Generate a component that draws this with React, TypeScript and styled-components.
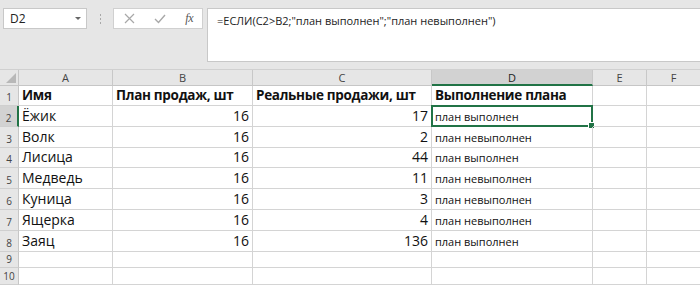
import React from 'react'
import styled, { createGlobalStyle, css } from 'styled-components'

const GlobalStyle = createGlobalStyle`
    html, body {
        margin: 0;
        padding: 0;
        background: #ffffff;
        overflow: hidden;
    }
    body {
        font-family: 'Open Sans', 'Liberation Sans', sans-serif;
    }
`

const GREEN = '#217346'
const GRID = '#d4d4d4'

const Window = styled.div`
    width: 700px;
    height: 288px;
    display: flex;
    flex-direction: column;
    background: #ffffff;
`

const Toolbar = styled.div`
    height: 70px;
    flex: none;
    background: #e6e6e6;
    display: flex;
    align-items: flex-start;
    padding: 8px 0 0 3px;
    box-sizing: border-box;
    border-bottom: 1px solid #d0d0d0;
`

const NameBox = styled.div`
    width: 84px;
    height: 21px;
    box-sizing: border-box;
    background: #ffffff;
    border: 1px solid #c8c8c8;
    display: flex;
    align-items: center;
    justify-content: space-between;
    padding: 0 5px 0 6px;
    font-size: 12px;
    color: #222;
`

const Caret = styled.span`
    width: 0;
    height: 0;
    border-left: 3px solid transparent;
    border-right: 3px solid transparent;
    border-top: 3px solid #666;
`

const Grip = styled.div`
    width: 26px;
    height: 21px;
    display: flex;
    flex-direction: column;
    align-items: center;
    justify-content: center;
    gap: 2px;

    span {
        width: 1px;
        height: 2px;
        background: #a8a8a8;
    }
`

const ButtonBox = styled.div`
    width: 90px;
    height: 21px;
    box-sizing: border-box;
    background: #ffffff;
    border: 1px solid #d0d0d0;
    display: flex;
    align-items: center;
    justify-content: space-between;
    padding: 0 9px 0 10px;
`

const Fx = styled.span`
    font-family: 'Liberation Serif', serif;
    font-style: italic;
    font-size: 12px;
    color: #555;
    letter-spacing: -0.5px;
`

const FormulaBar = styled.div`
    flex: 1;
    height: 54px;
    margin-left: 4px;
    box-sizing: border-box;
    background: #ffffff;
    border: 1px solid #c8c8c8;
    border-right: none;
    padding: 4px 0 0 9px;
    font-size: 11px;
    color: #222;
`

const Sheet = styled.div`
    display: grid;
    grid-template-columns: 19px 94px 140px 179px 161px 54px 54px;
    grid-template-rows: 16px 20px repeat(7, 20.8px) 16.5px 16.5px;
`

const Corner = styled.div`
    position: relative;
    background: #e6e6e6;
    border-right: 1px solid #c6c6c6;
    border-bottom: 1px solid #c6c6c6;

    &::after {
        content: '';
        position: absolute;
        right: 2px;
        bottom: 2px;
        border-left: 10px solid transparent;
        border-bottom: 10px solid #b8b8b8;
    }
`

const ColHead = styled.div<{ $selected?: boolean }>`
    background: #e6e6e6;
    border-right: 1px solid #c8c8c8;
    border-bottom: 1px solid #c6c6c6;
    display: flex;
    align-items: center;
    justify-content: center;
    font-size: 11px;
    color: #444;

    ${p => p.$selected && css`
        background: #d2d2d2;
        border-bottom: 2px solid ${GREEN};
        color: #222;
    `}
`

const RowHead = styled.div<{ $selected?: boolean }>`
    background: #e6e6e6;
    border-bottom: 1px solid #cfcfcf;
    border-right: 1px solid #c6c6c6;
    display: flex;
    align-items: flex-end;
    justify-content: center;
    padding-bottom: 1px;
    box-sizing: border-box;
    font-size: 10px;
    color: #444;

    ${p => p.$selected && css`
        background: #d2d2d2;
        border-right: 2px solid ${GREEN};
    `}
`

const Cell = styled.div<{ $right?: boolean; $bold?: boolean; $small?: boolean }>`
    position: relative;
    border-right: 1px solid ${GRID};
    border-bottom: 1px solid ${GRID};
    display: flex;
    align-items: flex-end;
    justify-content: ${p => (p.$right ? 'flex-end' : 'flex-start')};
    padding: 0 3px;
    box-sizing: border-box;
    font-size: ${p => (p.$small ? '11px' : p.$bold ? '13.5px' : '14px')};
    letter-spacing: ${p => (p.$bold ? '-0.3px' : '0')};
    font-weight: ${p => (p.$bold ? 700 : 400)};
    line-height: ${p => (p.$small ? '18px' : '20px')};
    color: #111;
    white-space: nowrap;
`

const Selection = styled.div`
    position: absolute;
    left: -1px;
    top: -1px;
    right: -1px;
    bottom: -1px;
    border: 2px solid ${GREEN};
    pointer-events: none;

    &::after {
        content: '';
        position: absolute;
        right: -4px;
        bottom: -4px;
        width: 5px;
        height: 5px;
        background: ${GREEN};
        border: 1px solid #ffffff;
    }
`

const columns = ['A', 'B', 'C', 'D', 'E', 'F']

const data: [string, number, number, string][] = [
    ['Ёжик', 16, 17, 'план выполнен'],
    ['Волк', 16, 2, 'план невыполнен'],
    ['Лисица', 16, 44, 'план выполнен'],
    ['Медведь', 16, 11, 'план невыполнен'],
    ['Куница', 16, 3, 'план невыполнен'],
    ['Ящерка', 16, 4, 'план невыполнен'],
    ['Заяц', 16, 136, 'план выполнен']
]

const CrossIcon = () => (
    <svg width='11' height='11' viewBox='0 0 11 11'>
        <path d='M1 1 L10 10 M10 1 L1 10' stroke='#a8a8a8' strokeWidth='1.2' fill='none' />
    </svg>
)

const CheckIcon = () => (
    <svg width='12' height='10' viewBox='0 0 12 10'>
        <path d='M1 5 L4.5 8.5 L11 1' stroke='#a8a8a8' strokeWidth='1.4' fill='none' />
    </svg>
)

const EmptyRow = ({ n }: { n: number }) => (
    <>
        <RowHead>{n}</RowHead>
        {columns.map(c => <Cell key={c} />)}
    </>
)

const App = () => (
    <Window>
        <GlobalStyle />
        <Toolbar>
            <NameBox>
                D2
                <Caret />
            </NameBox>
            <Grip>
                <span />
                <span />
                <span />
            </Grip>
            <ButtonBox>
                <CrossIcon />
                <CheckIcon />
                <Fx>fx</Fx>
            </ButtonBox>
            <FormulaBar>=ЕСЛИ(C2&gt;B2;"план выполнен";"план невыполнен")</FormulaBar>
        </Toolbar>
        <Sheet>
            <Corner />
            {columns.map(c => (
                <ColHead key={c} $selected={c === 'D'}>{c}</ColHead>
            ))}

            <RowHead>1</RowHead>
            <Cell $bold>Имя</Cell>
            <Cell $bold>План продаж, шт</Cell>
            <Cell $bold>Реальные продажи, шт</Cell>
            <Cell $bold>Выполнение плана</Cell>
            <Cell />
            <Cell />

            {data.map(([name, plan, real, result], i) => (
                <React.Fragment key={name}>
                    <RowHead $selected={i === 0}>{i + 2}</RowHead>
                    <Cell>{name}</Cell>
                    <Cell $right>{plan}</Cell>
                    <Cell $right>{real}</Cell>
                    <Cell $small>
                        {result}
                        {i === 0 && <Selection />}
                    </Cell>
                    <Cell />
                    <Cell />
                </React.Fragment>
            ))}

            <EmptyRow n={9} />
            <EmptyRow n={10} />
        </Sheet>
    </Window>
)

export default App
